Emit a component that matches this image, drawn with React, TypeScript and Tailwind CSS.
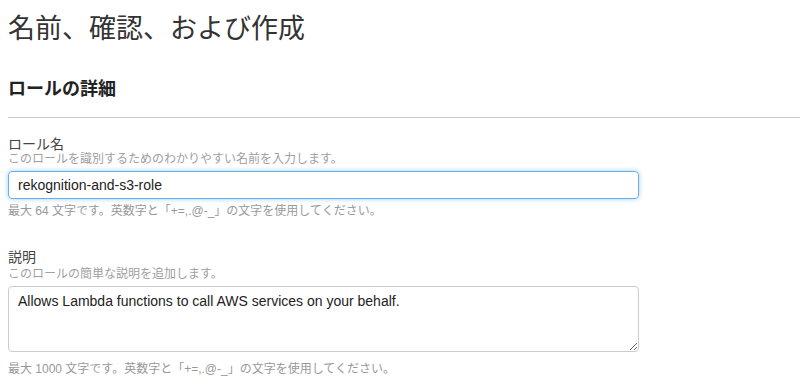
const font = {
  fontFamily: '"Liberation Sans", Arial, "Noto Sans CJK JP", sans-serif',
};

export default function App() {
  return (
    <div className="w-[800px] h-[387px] bg-white overflow-hidden text-[#333]" style={font}>
      <div className="pl-2">
        <h1 className="pt-[13px] text-[27px] leading-[32px] font-normal text-[#333]">
          名前、確認、および作成
        </h1>
        <h2 className="mt-[32px] text-[18px] leading-[24px] font-bold text-[#222]">
          ロールの詳細
        </h2>
        <div className="mt-[16px] h-px bg-[#ccc]" />

        <div className="w-[631px]">
          <label htmlFor="role-name" className="block mt-[18px] text-[14px] leading-[16px] text-[#444]">
            ロール名
          </label>
          <p className="text-[12px] leading-[14px] text-[#a0a0a0]">
            このロールを識別するためのわかりやすい名前を入力します。
          </p>
          <input
            id="role-name"
            type="text"
            defaultValue="rekognition-and-s3-role"
            className="block mt-[5px] w-full h-[28px] px-[9px] rounded-[4px] border border-[#66afe9] shadow-[0_0_5px_rgba(102,175,233,0.6)] text-[14px] text-[#222] outline-none"
          />
          <p className="mt-[5px] text-[12px] leading-[14px] text-[#999]">
            最大 64 文字です。英数字と「+=,.@-_」の文字を使用してください。
          </p>

          <label htmlFor="role-desc" className="block mt-[31px] text-[14px] leading-[16px] text-[#444]">
            説明
          </label>
          <p className="mt-[2px] text-[12px] leading-[14px] text-[#a0a0a0]">
            このロールの簡単な説明を追加します。
          </p>
          <textarea
            id="role-desc"
            defaultValue="Allows Lambda functions to call AWS services on your behalf."
            className="block mt-[5px] w-full h-[66px] px-[9px] pt-[5px] rounded-[4px] border border-[#ccc] text-[14px] leading-[18px] text-[#222] outline-none resize-y"
          />
          <p className="mt-[10px] text-[12px] leading-[14px] text-[#999]">
            最大 1000 文字です。英数字と「+=,.@-_」の文字を使用してください。
          </p>
        </div>
      </div>
    </div>
  );
}
